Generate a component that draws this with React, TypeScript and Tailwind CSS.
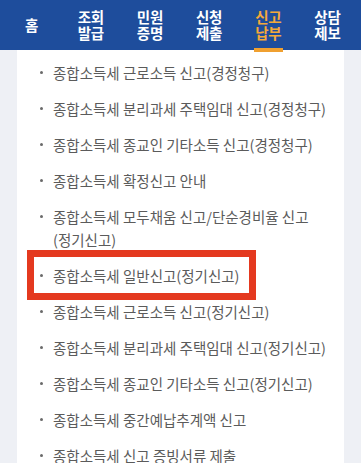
import React from 'react';

const tabs = [
  ['홈'],
  ['조회', '발급'],
  ['민원', '증명'],
  ['신청', '제출'],
  ['신고', '납부'],
  ['상담', '제보'],
];

const items = [
  '종합소득세 근로소득 신고(경정청구)',
  '종합소득세 분리과세 주택임대 신고(경정청구)',
  '종합소득세 종교인 기타소득 신고(경정청구)',
  '종합소득세 확정신고 안내',
  '종합소득세 모두채움 신고/단순경비율 신고 (정기신고)',
  '종합소득세 일반신고(정기신고)',
  '종합소득세 근로소득 신고(정기신고)',
  '종합소득세 분리과세 주택임대 신고(정기신고)',
  '종합소득세 종교인 기타소득 신고(정기신고)',
  '종합소득세 중간예납추계액 신고',
  '종합소득세 신고 증빙서류 제출',
];

export default function App() {
  return (
    <div
      className="w-[361px] h-[463px] overflow-hidden bg-[#eef0f5]"
      style={{ fontFamily: '"Noto Sans CJK KR", "Noto Sans", sans-serif' }}
    >
      <div className="relative h-[50px] bg-[#1e4d9c]">
        <div className="grid grid-cols-6 w-[355px] ml-[2px] h-full">
          {tabs.map((t, i) => (
            <div key={i} className="flex items-center justify-center">
              <p
                className={`text-center text-[14.5px] font-bold leading-[16px] tracking-[-0.3px] ${
                  i === 4 ? 'text-[#f4a93a]' : 'text-white'
                }`}
              >
                {t[0]}
                {t[1] && (
                  <>
                    <br />
                    {t[1]}
                  </>
                )}
              </p>
            </div>
          ))}
        </div>
        <div className="absolute left-[254px] top-[48px] w-[29px] h-[4px] bg-[#f0a030]" />
      </div>

      <div className="mx-[17px] bg-white pt-[4px] h-[413px]">
        {items.map((text, i) => (
          <div
            key={i}
            className={`ml-[17px] flex py-[6.5px] pl-[6px] pr-[10px] text-[14.5px] leading-[23px] text-[#5b5b5b] break-keep ${
              i === 5 ? 'w-fit outline-[7px] outline-solid outline-[#e4391f]' : ''
            }`}
          >
            <span className="w-[13px] shrink-0 flex h-[23px] items-center">
              <span className="w-[3px] h-[3px] rounded-full bg-[#6a6a6a]" />
            </span>
            <span>{text}</span>
          </div>
        ))}
      </div>
    </div>
  );
}
